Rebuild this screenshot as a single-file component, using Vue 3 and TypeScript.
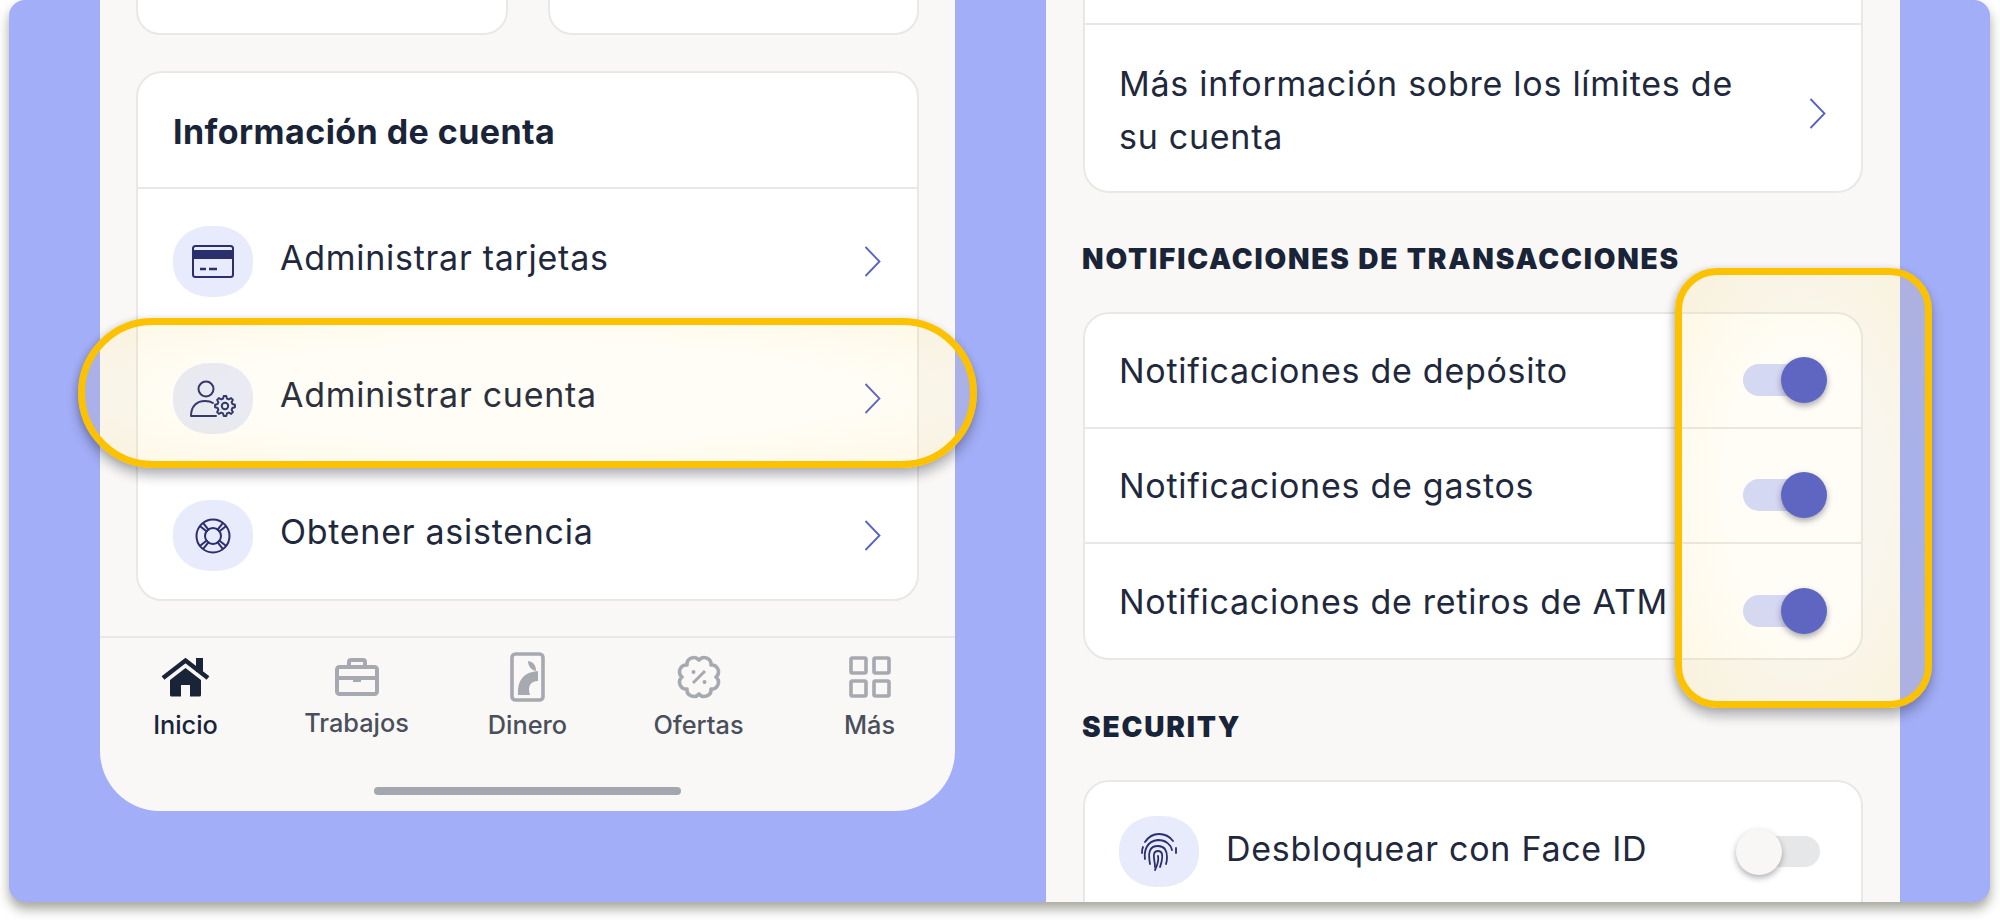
<script setup lang="ts">
interface AccountRow {
  icon: "card" | "user" | "help";
  label: string;
}

interface NavItem {
  icon: "home" | "case" | "money" | "offer" | "more";
  label: string;
  active?: boolean;
  raised?: boolean;
}

const accountRows: AccountRow[] = [
  { icon: "card", label: "Administrar tarjetas" },
  { icon: "user", label: "Administrar cuenta" },
  { icon: "help", label: "Obtener asistencia" },
];

const navItems: NavItem[] = [
  { icon: "home", label: "Inicio", active: true },
  { icon: "case", label: "Trabajos", raised: true },
  { icon: "money", label: "Dinero" },
  { icon: "offer", label: "Ofertas" },
  { icon: "more", label: "Más" },
];

const notifications = [
  "Notificaciones de depósito",
  "Notificaciones de gastos",
  "Notificaciones de retiros de ATM",
];

// scalloped outline for the offers badge
const scallop = (cx: number, cy: number, r: number, bumps: number) => {
  const bump = r * Math.sin(Math.PI / bumps) * 1.05;
  let d = "";
  for (let i = 0; i <= bumps; i++) {
    const a = (i / bumps) * Math.PI * 2;
    const x = (cx + r * Math.cos(a)).toFixed(2);
    const y = (cy + r * Math.sin(a)).toFixed(2);
    d += i === 0 ? `M${x} ${y}` : ` A${bump.toFixed(2)} ${bump.toFixed(2)} 0 0 1 ${x} ${y}`;
  }
  return d + "Z";
};

// toothed outline for the settings gear
const gear = (cx: number, cy: number, outer: number, inner: number, teeth: number) => {
  const pts: string[] = [];
  const step = (Math.PI * 2) / teeth;
  for (let i = 0; i < teeth; i++) {
    const a = i * step;
    const add = (angle: number, r: number) =>
      pts.push(`${(cx + r * Math.cos(angle)).toFixed(2)} ${(cy + r * Math.sin(angle)).toFixed(2)}`);
    add(a - step * 0.16, outer);
    add(a + step * 0.16, outer);
    add(a + step * 0.34, inner);
    add(a + step * 0.66, inner);
  }
  return "M" + pts.join(" L") + "Z";
};

const offerPath = scallop(22, 22, 17, 8);
const gearPath = gear(35, 26, 10, 7.6, 8);
</script>

<template>
  <div class="page">
    <div class="panel">
      <section class="phone phone-left">
        <div class="phone-body">
          <div class="top-cards">
            <div class="top-card"></div>
            <div class="top-card"></div>
          </div>

          <div class="card account">
            <h2 class="account-title">Información de cuenta</h2>
            <div v-for="row in accountRows" :key="row.label" class="account-row">
              <span class="blob">
                <svg v-if="row.icon === 'card'" width="42" height="33" viewBox="0 0 42 33" fill="none" stroke="#2b2f6b" stroke-width="2">
                  <rect x="1" y="1" width="40" height="31" rx="2.5" />
                  <rect x="1" y="6" width="40" height="7" fill="#2b2f6b" />
                  <path d="M8 24h6M17 24h8" stroke-width="2.4" />
                </svg>
                <svg v-else-if="row.icon === 'user'" width="46" height="38" viewBox="0 0 46 38" fill="none" stroke="#2b2f6b" stroke-width="2">
                  <circle cx="16" cy="9" r="7.5" />
                  <path d="M1 36c0-10 6-15 14-15 3 0 6 .6 8 2M1 36h25" stroke-linecap="round" />
                  <path :d="gearPath" stroke-linejoin="round" />
                  <circle cx="35" cy="26" r="3.2" />
                </svg>
                <svg v-else width="36" height="36" viewBox="0 0 36 36" fill="none" stroke="#2b2f6b" stroke-width="2">
                  <circle cx="18" cy="18" r="16.5" />
                  <circle cx="18" cy="18" r="8" />
                  <path d="M8 4.8l6 7.6M4.8 8l7.6 6M28 4.8l-6 7.6M31.2 8l-7.6 6M8 31.2l6-7.6M4.8 28l7.6-6M28 31.2l-6-7.6M31.2 28l-7.6-6" />
                </svg>
              </span>
              <span class="row-text">{{ row.label }}</span>
              <svg class="chevron" width="17" height="31" viewBox="0 0 17 31" fill="none">
                <path d="M1.5 1l14 14.5-14 14.5" stroke="#5561c5" stroke-width="1.8" />
              </svg>
            </div>
          </div>
        </div>

        <nav class="tabbar">
          <div class="tabs">
            <div
              v-for="item in navItems"
              :key="item.label"
              class="tab"
              :class="{ active: item.active, raised: item.raised }"
            >
              <span class="tab-icon">
                <svg v-if="item.icon === 'home'" width="49" height="40" viewBox="0 0 49 40" fill="none">
                  <path d="M2 21L24.5 3.5 47 21" stroke="#1a2438" stroke-width="4.5" />
                  <rect x="35" y="1" width="7" height="14" fill="#1a2438" />
                  <path d="M24.5 11L40 23v15a1.5 1.5 0 0 1-1.5 1.5H29V28h-9v11.5H10.5A1.5 1.5 0 0 1 9 38V23z" fill="#1a2438" />
                </svg>
                <svg v-else-if="item.icon === 'case'" width="44" height="38" viewBox="0 0 44 38" fill="none" stroke="#a6a9af" stroke-width="4">
                  <rect x="2" y="9" width="40" height="27" rx="2.5" />
                  <path d="M14 9V4a2 2 0 0 1 2-2h12a2 2 0 0 1 2 2v5" />
                  <path d="M2 20h40" />
                  <rect x="18" y="18" width="8" height="6" fill="#a6a9af" stroke="none" />
                </svg>
                <svg v-else-if="item.icon === 'money'" width="35" height="50" viewBox="0 0 35 50" fill="none">
                  <rect x="2" y="2" width="31" height="46" rx="3.5" stroke="#a6a9af" stroke-width="3.6" />
                  <path d="M18 9C24 10 26 14 26 19 21 18 18 14 18 9Z" fill="#a6a9af" />
                  <path d="M8 43C7 28 14 20 28 19V29C21 29 17 34 20 43Z" fill="#a6a9af" />
                </svg>
                <svg v-else-if="item.icon === 'offer'" width="44" height="44" viewBox="0 0 44 44" fill="none" stroke="#a6a9af">
                  <path :d="offerPath" stroke-width="3.6" stroke-linejoin="round" />
                  <path d="M16 28l12-12" stroke-width="3" />
                  <circle cx="16.5" cy="17" r="2" fill="#a6a9af" stroke="none" />
                  <circle cx="27.5" cy="27" r="2" fill="#a6a9af" stroke="none" />
                </svg>
                <svg v-else width="42" height="42" viewBox="0 0 42 42" fill="none" stroke="#a6a9af" stroke-width="3.6">
                  <rect x="2" y="2" width="15" height="15" rx="1.5" />
                  <rect x="25" y="2" width="15" height="15" rx="1.5" />
                  <rect x="2" y="25" width="15" height="15" rx="1.5" />
                  <rect x="25" y="25" width="15" height="15" rx="1.5" />
                </svg>
              </span>
              <span class="tab-label">{{ item.label }}</span>
            </div>
          </div>
          <div class="home-bar"></div>
        </nav>
      </section>

      <section class="phone phone-right">
        <div class="card limits">
          <div class="limits-top"></div>
          <div class="limits-row">
            <span class="row-text limits-text">Más información sobre los límites de su cuenta</span>
            <svg class="chevron" width="17" height="31" viewBox="0 0 17 31" fill="none">
              <path d="M1.5 1l14 14.5-14 14.5" stroke="#5561c5" stroke-width="1.8" />
            </svg>
          </div>
        </div>

        <h3 class="section-title first">NOTIFICACIONES DE TRANSACCIONES</h3>
        <div class="card notifications">
          <div v-for="label in notifications" :key="label" class="notify-row">
            <span class="row-text notify-text">{{ label }}</span>
            <span class="toggle on"><span class="knob"></span></span>
          </div>
        </div>

        <h3 class="section-title second">SECURITY</h3>
        <div class="card security">
          <div class="security-row">
            <span class="blob blob-face">
              <svg width="38" height="38" viewBox="0 0 38 38" fill="none" stroke="#2b2f6b" stroke-width="1.8" stroke-linecap="round">
                <path d="M5 9C9 3 14 1 19 1 25 1 30 4 33 8" />
                <path d="M5 26C4 19 6 8 18 7 26 7 31 12 32 17" />
                <path d="M2 20C2 17 2.5 15 3 14M36 15V20" />
                <path d="M10 31C8 20 9 13 18 13 25 13 27 18 27 24 27 27 27 29 26 31" />
                <path d="M15 34C15 28 13 24 14 21 15 17 21 17 22 21 23 26 21 31 20 34" />
                <path d="M18 23C19 28 17 33 15 37" />
              </svg>
            </span>
            <span class="row-text">Desbloquear con Face ID</span>
            <span class="toggle off"><span class="knob"></span></span>
          </div>
        </div>
      </section>

      <div class="callout callout-row"></div>
      <div class="callout callout-toggles"></div>
    </div>
  </div>
</template>

<style scoped>
.page {
  height: 920px;
  overflow: hidden;
}

.panel {
  position: relative;
  display: flex;
  gap: 91px;
  width: 1981px;
  height: 902px;
  margin-left: 9px;
  padding-left: 91px;
  box-sizing: border-box;
  background: #a2aef7;
  border-radius: 16px;
  box-shadow: 0 7px 12px rgba(60, 60, 40, 0.45);
  overflow: hidden;
  font-family: Inter, "Liberation Sans", sans-serif;
  color: #1a2438;
}

.phone {
  box-sizing: border-box;
  width: 855px;
  background: #f9f8f6;
}

.phone-left {
  display: flex;
  flex-direction: column;
  height: 811px;
  border-radius: 0 0 60px 60px;
}

.phone-body {
  padding: 0 36px;
  flex: 1;
}

.phone-right {
  width: 854px;
  height: 902px;
  padding: 0 37px;
  overflow: hidden;
}

.top-cards {
  display: grid;
  grid-template-columns: 1fr 1fr;
  gap: 40px;
  height: 35px;
}

.top-card {
  background: #fff;
  border: 2px solid #e9e8e4;
  border-top: 0;
  border-radius: 0 0 24px 24px;
}

.card {
  background: #fff;
  border: 2px solid #e9e8e4;
  border-radius: 26px;
}

.account {
  box-sizing: border-box;
  height: 530px;
  margin-top: 36px;
}

.account-title {
  box-sizing: border-box;
  height: 116px;
  margin: 0;
  padding: 0 35px;
  font-size: 34px;
  font-weight: 700;
  line-height: 118px;
  letter-spacing: 0.43px;
  border-bottom: 2px solid #e9e8e4;
}

.account-row {
  display: flex;
  align-items: center;
  height: 137px;
  padding: 0 36px 0 35px;
}

.blob {
  display: flex;
  flex: none;
  align-items: center;
  justify-content: center;
  width: 80px;
  height: 71px;
  margin-top: 8px;
  margin-right: 27px;
  background: #e8ebfb;
  border-radius: 46%;
}

.row-text {
  flex: 1;
  font-size: 34px;
  font-weight: 400;
  letter-spacing: 0.73px;
  color: #1f283c;
}

.chevron {
  flex: none;
  margin-top: 8px;
}

.tabbar {
  height: 175px;
  border-top: 2px solid #e9e8e4;
  box-sizing: border-box;
}

.tabs {
  display: grid;
  grid-template-columns: repeat(5, 1fr);
  padding-top: 13px;
}

.tab {
  display: flex;
  flex-direction: column;
  align-items: center;
}

.tab-icon {
  display: flex;
  align-items: center;
  justify-content: center;
  height: 52px;
}

.tab-label {
  margin-top: 6px;
  font-size: 25.3px;
  font-weight: 500;
  line-height: 32px;
  color: #4a4f5c;
}

.tab.raised .tab-label {
  margin-top: 4px;
}

.tab.active .tab-label {
  color: #1a2438;
}

.home-bar {
  width: 307px;
  height: 8px;
  margin: 46px auto 0;
  background: #a4a7ae;
  border-radius: 4px;
}

.limits {
  box-sizing: border-box;
  height: 193px;
  border-top: 0;
  border-radius: 0 0 26px 26px;
}

.limits-top {
  height: 23px;
  border-bottom: 2px solid #e9e8e4;
}

.limits-row {
  display: flex;
  align-items: center;
  height: 166px;
  padding: 0 35px 0 34px;
}

.limits-text {
  line-height: 53px;
  padding-right: 60px;
  margin-top: 4px;
}

.limits-row .chevron {
  margin-top: 10px;
}

.section-title {
  margin: 0 0 0 -1px;
  font-size: 28px;
  font-weight: 900;
  line-height: 34px;
  letter-spacing: 1.83px;
  color: #1a2438;
}

.section-title.first {
  margin-top: 49px;
}

.section-title.second {
  margin-top: 50px;
}

.notifications {
  box-sizing: border-box;
  height: 348px;
  margin-top: 36px;
}

.notify-row {
  display: flex;
  align-items: center;
  box-sizing: border-box;
  height: 115px;
  padding: 0 34px;
  border-bottom: 2px solid #e9e8e4;
}

.notify-row:last-child {
  border-bottom: 0;
}

.notify-text {
  white-space: nowrap;
}

.toggle {
  position: relative;
  flex: none;
  width: 72px;
  height: 32px;
  margin-top: 19px;
  margin-right: 12px;
  border-radius: 16px;
}

.toggle.on {
  background: #d3d8fa;
}

.toggle.off {
  width: 76px;
  height: 31px;
  margin-top: 27px;
  margin-right: 7px;
  background: #e6e7e8;
}

.knob {
  position: absolute;
  top: -7px;
  width: 46px;
  height: 46px;
  border-radius: 50%;
}

.toggle.on .knob {
  right: -12px;
  background: #5560c8;
  box-shadow: 0 3px 6px rgba(30, 30, 60, 0.4);
}

.toggle.off .knob {
  left: -8px;
  background: #f8f7f5;
  box-shadow: 0 3px 6px rgba(30, 30, 40, 0.35);
}

.security {
  height: 200px;
  margin-top: 36px;
}

.security-row {
  display: flex;
  align-items: flex-start;
  padding: 27px 34px 0;
}

.security-row .blob {
  margin-top: 7px;
}

.security-row .row-text {
  margin-top: 19px;
}

.callout {
  position: absolute;
  box-sizing: border-box;
  border: 7px solid #fcc200;
  box-shadow: 0 8px 12px rgba(20, 20, 40, 0.3), -2px 0 6px rgba(20, 20, 40, 0.12);
}

.callout-row {
  top: 318px;
  left: 69px;
  width: 899px;
  height: 150px;
  border-radius: 75px;
  background: radial-gradient(ellipse at center, rgba(255, 215, 80, 0.05) 50%, rgba(250, 200, 60, 0.13) 100%);
}

.callout-toggles {
  top: 268px;
  left: 1666px;
  width: 257px;
  height: 440px;
  border-radius: 42px;
  background: radial-gradient(ellipse at center, rgba(255, 215, 80, 0.05) 45%, rgba(250, 200, 60, 0.14) 100%);
}
</style>

<style>
html,
body {
  margin: 0;
  background: #fff;
}
</style>
